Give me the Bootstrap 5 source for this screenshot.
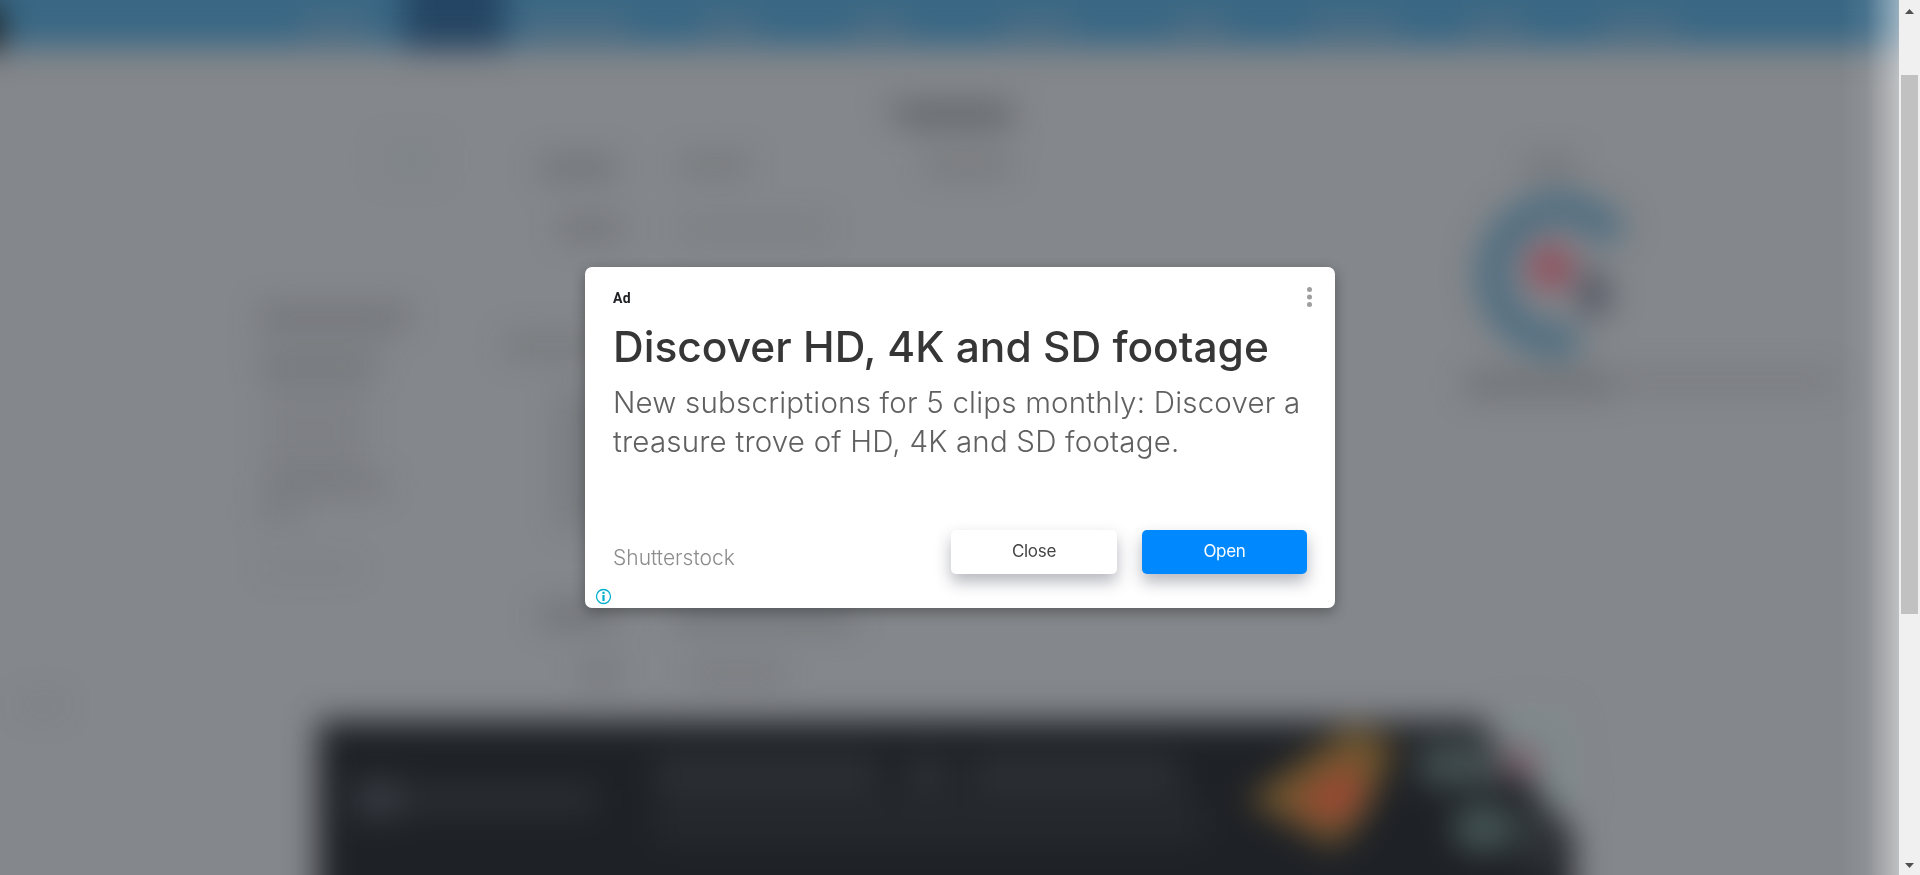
<!DOCTYPE html>
<html lang="en">
<head>
<meta charset="utf-8">
<meta name="viewport" content="width=device-width, initial-scale=1">
<title>Discover HD, 4K and SD footage</title>
<link href="https://cdn.jsdelivr.net/npm/bootstrap@5.3.0/dist/css/bootstrap.min.css" rel="stylesheet">
<style>
  body { font-family: Inter, "Open Sans", sans-serif; background: #84878b; }
  .stage { min-width: 0; }
  .scene { position: absolute; inset: 0; width: 100%; height: 100%; }
  .ad-box { width: 750px; height: 341px; margin-left: 585px; padding: 20px 28px 34px; border: 0; border-radius: 7px; background: #fff; box-shadow: 0 4px 14px rgba(0,0,0,.32); --bs-card-border-width: 0; }
  .ad-label { font: 700 14px/20px Roboto, sans-serif; color: #202124; letter-spacing: .4px; padding-top: 1px; }
  .ad-title { margin-top: 13px; font-size: 42.5px; line-height: 52px; font-weight: 500; color: #363636; white-space: nowrap; }
  .ad-text { margin-top: 10px; font-size: 29.5px; line-height: 39px; font-weight: 300; letter-spacing: .2px; color: #606060; white-space: nowrap; }
  .ad-brand { font-size: 21px; line-height: 26px; font-weight: 300; color: #8c8c8c; padding-top: 11px; }
  .ad-btn { width: 166px; height: 44px; padding: 0; border: 0; border-radius: 5px; font-size: 17px; letter-spacing: -.3px; line-height: 42px; padding-bottom: 2px; box-shadow: 0 8px 16px rgba(40,45,65,.34); }
  .ad-close { background: #fff; color: #444; margin-right: 25px; }
  .ad-open { background: #08f; color: #fff; width: 165px; }
  .info-mark { position: absolute; left: 10px; bottom: 3px; }
  .more-mark { margin-right: -11px; }
  .track { width: 21px; background: #f0f0f0; }
  .thumb { width: 17px; height: 539px; background: #c1c1c1; margin-top: 58px; }
</style>
</head>
<body class="vh-100 overflow-hidden">
<div class="d-flex h-100">
  <main class="stage position-relative flex-fill d-flex align-items-center overflow-hidden">
    <svg class="scene" viewBox="0 0 1899 875" preserveAspectRatio="none" aria-hidden="true">
      <defs>
        <filter id="soft" filterUnits="userSpaceOnUse" x="-80" y="-80" width="2100" height="1060" color-interpolation-filters="sRGB"><feGaussianBlur stdDeviation="16"/></filter>
        <linearGradient id="edge"><stop offset="0" stop-color="#fff" stop-opacity="0"/><stop offset=".45" stop-color="#fff" stop-opacity=".08"/><stop offset="1" stop-color="#fff" stop-opacity=".48"/></linearGradient>
      </defs>
      <rect width="1899" height="875" fill="#84878b"/>
      <g filter="url(#soft)">
        <rect x="-80" y="-80" width="2100" height="127" fill="#396784"/>
        <g fill="#687682" opacity=".45">
          <rect x="300" y="15" width="70" height="22"/><rect x="520" y="15" width="110" height="22"/><rect x="700" y="15" width="60" height="22"/><rect x="850" y="15" width="60" height="22"/><rect x="1000" y="15" width="75" height="22"/><rect x="1170" y="15" width="60" height="22"/><rect x="1310" y="15" width="90" height="22"/><rect x="1465" y="15" width="60" height="22"/><rect x="1600" y="15" width="80" height="22"/>
        </g>
        <rect x="404" y="-80" width="100" height="130" fill="#244563"/>
        <rect x="-80" y="5" width="82" height="46" fill="#1c2226"/>
        <g fill="#4c4f53" opacity=".6">
          <path d="M882 102h130v25h-105z" opacity=".95"/>
          <rect x="925" y="155" width="85" height="20" opacity=".4"/>
          <rect x="540" y="158" width="76" height="20" opacity=".6"/><rect x="680" y="155" width="70" height="20" opacity=".4"/>
          <rect x="558" y="218" width="64" height="20" opacity=".55"/><rect x="680" y="219" width="150" height="18" opacity=".25"/>
          <rect x="260" y="306" width="150" height="20" opacity=".55"/><rect x="260" y="334" width="130" height="12" opacity=".25"/>
          <rect x="260" y="358" width="115" height="20" opacity=".5"/><rect x="265" y="388" width="100" height="90" opacity=".18"/>
          <rect x="265" y="474" width="120" height="22" opacity=".35"/><rect x="258" y="500" width="45" height="24" opacity=".25"/>
          <rect x="260" y="560" width="100" height="16" opacity=".15"/>
          <rect x="505" y="335" width="100" height="22" opacity=".4"/><rect x="558" y="390" width="50" height="140" opacity=".3"/>
          <rect x="540" y="605" width="76" height="20" opacity=".65"/><rect x="675" y="605" width="180" height="22" opacity=".5"/>
          <rect x="580" y="663" width="40" height="20" opacity=".45"/><rect x="690" y="663" width="95" height="20" opacity=".35"/>
          <rect x="20" y="696" width="45" height="18" opacity=".2"/>
          <rect x="1525" y="156" width="52" height="20" opacity=".45"/>
          <rect x="1465" y="372" width="150" height="24" opacity=".58"/><rect x="1620" y="372" width="215" height="18" opacity=".35"/>
        </g>
        <rect x="385" y="146" width="50" height="28" fill="#748580" opacity=".35"/>
        <path d="M1614 238A66 66 0 1 0 1577 338" fill="none" stroke="#4e6d80" stroke-width="34"/>
        <circle cx="1551" cy="267" r="23" fill="#914e5c"/>
        <path d="M1590 262l22 32-16 28-20-22z" fill="#4c505e"/>
        <path d="M318 721H1480L1573 835V980H318z" fill="#1e2126"/>
        <g fill="#55595e" opacity=".55">
          <rect x="355" y="780" width="45" height="38" opacity=".85"/><rect x="400" y="786" width="195" height="26" opacity=".5"/>
          <rect x="655" y="756" width="225" height="36" opacity=".5"/><rect x="905" y="756" width="45" height="36" opacity=".5"/><rect x="970" y="756" width="210" height="36" opacity=".5"/>
          <rect x="655" y="796" width="550" height="48" opacity=".26"/>
        </g>
        <path d="M1247 800L1352 725L1396 744L1366 815L1335 848z" fill="#755a2e" opacity=".95"/>
        <path d="M1290 806L1350 762L1364 790L1342 822z" fill="#9c4834"/>
        <rect x="1420" y="742" width="80" height="44" fill="#526462" opacity=".7"/>
        <path d="M1494 712h72l14 90h-24l-40-35z" fill="#7c8d8d" opacity=".65"/>
        <rect x="1500" y="744" width="42" height="34" fill="#80626e" opacity=".75"/>
        <ellipse cx="1484" cy="828" rx="32" ry="24" fill="#566c6a" opacity=".7"/>
        <rect x="1520" y="800" width="35" height="70" fill="#4c5557" opacity=".4"/>
      </g>
      <rect x="1839" width="60" height="875" fill="url(#edge)"/>
    </svg>
    <section class="card ad-box position-relative">
      <div class="d-flex justify-content-between">
        <span class="ad-label">Ad</span>
        <svg class="more-mark" width="17" height="20" viewBox="0 0 17 20" fill="#9e9e9e"><circle cx="8.5" cy="2.5" r="2.5"/><circle cx="8.5" cy="10" r="2.5"/><circle cx="8.5" cy="17.5" r="2.5"/></svg>
      </div>
      <div class="ad-title">Discover HD, 4K and SD footage</div>
      <div class="ad-text">New subscriptions for 5 clips monthly: Discover a<br>treasure trove of HD, 4K and SD footage.</div>
      <div class="d-flex align-items-center mt-auto">
        <span class="ad-brand me-auto">Shutterstock</span>
        <button class="btn ad-btn ad-close" type="button">Close</button>
        <button class="btn ad-btn ad-open" type="button">Open</button>
      </div>
      <svg class="info-mark" width="17" height="17" viewBox="0 0 17 17"><circle cx="8.5" cy="8.5" r="7" fill="none" stroke="#00aecd" stroke-width="1.3"/><rect x="7.4" y="3.8" width="2.2" height="2.1" fill="#00aecd"/><rect x="7.4" y="7" width="2.2" height="6" fill="#00aecd"/></svg>
    </section>
  </main>
  <aside class="track flex-shrink-0 d-flex flex-column align-items-center">
    <svg width="21" height="17" viewBox="0 0 21 17"><path d="M6 14L10.5 9L15 14z" fill="#505050"/></svg>
    <div class="thumb"></div>
    <svg class="mt-auto" width="21" height="17" viewBox="0 0 21 17"><path d="M6 5L10.5 10L15 5z" fill="#505050"/></svg>
  </aside>
</div>
<script src="https://cdn.jsdelivr.net/npm/bootstrap@5.3.0/dist/js/bootstrap.bundle.min.js"></script>
</body>
</html>
